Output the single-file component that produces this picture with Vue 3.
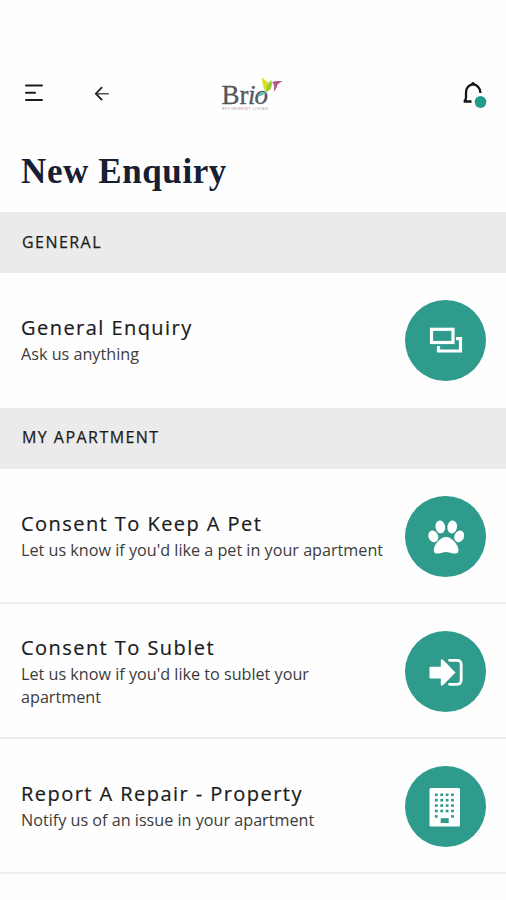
<template>
  <div class="page">
    <header class="topbar">
      <button class="icon-button menu-button" aria-label="Menu">
        <svg width="20" height="18" viewBox="0 0 20 18" fill="none" stroke="#1c1c24" stroke-width="2" stroke-linecap="round">
          <path d="M2 1.5H18M2 8.7H11M2 15.9H18" />
        </svg>
      </button>
      <button class="icon-button back-button" aria-label="Back">
        <svg width="16" height="16" viewBox="0 0 16 16" fill="none" stroke-linecap="round">
          <path d="M2 8.7H14.3" stroke="#555" stroke-width="1.4" />
          <path d="M7.6 2.6L1.9 8.7L7.6 14.6" stroke="#222" stroke-width="1.8" />
        </svg>
      </button>

      <svg class="logo" width="64" height="38" viewBox="0 0 64 38">
        <text class="logo-name" x="0.5" y="28.500" textLength="27">Br</text>
        <text class="logo-name logo-italic" x="27" y="28.500" textLength="20">io</text>
        <path d="M41 2C43 6 50 7 50 12C50 16 46 17 44 16C42 12 41 7 41 2Z" fill="#d9df2a" />
        <path d="M50 5C52 9 51 15 45 17C45 12 47 8 50 5Z" fill="#9ccb3b" />
        <path d="M37 20C39 18 42 17 46 17.500C44 19 41 20.500 38 21.500Z" fill="#62bfb9" />
        <path d="M51 7.500C54 5.500 58 6 61.500 6.200C58 8 56.500 9 55.500 13L52.500 17C53.500 13 53.500 9 51 7.500Z" fill="#b65a86" />
        <text class="logo-tag" x="1" y="34.500" textLength="46">RETIREMENT LIVING</text>
      </svg>

      <button class="icon-button bell-button" aria-label="Notifications">
        <svg width="25" height="28" viewBox="0 0 25 28">
          <path
            d="M8.500 20.500H1.800V19.500C2.800 18.800 3 18 3 16.500V11.500C3 7 5.600 4.300 10 3.200C14.600 4.300 17.300 7 17.500 12"
            fill="none" stroke="#15151a" stroke-width="2.300"
          />
          <circle cx="10" cy="2.800" r="1.800" fill="#15151a" />
          <circle cx="17.500" cy="21" r="5.900" fill="#249b88" />
        </svg>
      </button>
    </header>

    <h1 class="title">New Enquiry</h1>

    <section v-for="section in sections" :key="section.label">
      <h2 class="section-label">{{ section.label }}</h2>
      <div v-for="item in section.items" :key="item.title" class="row">
        <div class="row-text">
          <h3>{{ item.title }}</h3>
          <p>{{ item.description }}</p>
        </div>
        <div class="row-icon">
          <svg v-if="item.icon === 'chat'" width="40" height="40" viewBox="0 0 40 40" fill="none" stroke="#fff" stroke-width="3.200">
            <rect x="5.500" y="8.300" width="21.500" height="13.200" />
            <path d="M30 17.700H34.500V30H12.500V25" />
          </svg>
          <svg v-else-if="item.icon === 'paw'" width="40" height="40" viewBox="0 0 40 40" fill="#fff">
            <ellipse cx="14.300" cy="9.900" rx="4.800" ry="6.500" transform="rotate(-8 14.300 9.900)" />
            <ellipse cx="26.200" cy="9.900" rx="4.800" ry="6.500" transform="rotate(8 26.200 9.900)" />
            <ellipse cx="7.300" cy="19.400" rx="4.800" ry="6" transform="rotate(-22 7.300 19.400)" />
            <ellipse cx="33.200" cy="19.400" rx="4.800" ry="6" transform="rotate(22 33.200 19.400)" />
            <path d="M20 20C26.500 20 32.500 28.500 32.500 33C32.500 36 30.500 36.500 28 36.500C25 36.500 23 34.900 20 34.900C17 34.900 15 36.500 12 36.500C9.500 36.500 7.800 36 7.800 33C7.800 28.500 13.500 20 20 20Z" />
          </svg>
          <svg v-else-if="item.icon === 'enter'" width="40" height="40" viewBox="0 0 40 40">
            <path d="M4.500 14.800H14.800V8.500Q15.200 6.300 17.200 7.900L29.500 20.500L17.200 33Q15.200 34.600 14.800 32.400V26.500H4.500Q3.500 26.500 3.500 25.500V16Q3.500 14.800 4.500 14.800Z" fill="#fff" />
            <path d="M23.500 8.300H31Q35.200 8.300 35.200 12.500V28Q35.200 32.300 31 32.300H23.500" fill="none" stroke="#fff" stroke-width="2.800" stroke-linecap="round" />
          </svg>
          <svg v-else width="40" height="40" viewBox="0 0 40 40">
            <rect x="3.500" y="1" width="30.500" height="38.500" rx="1.500" fill="#fff" />
            <rect
              v-for="dot in windows" :key="`${dot.x}-${dot.y}`"
              :x="dot.x" :y="dot.y" width="2.800" height="2.600" fill="#2f9b8c"
            />
            <rect x="14.700" y="31.200" width="8" height="4.800" fill="#2f9b8c" />
          </svg>
        </div>
      </div>
    </section>
  </div>
</template>

<script setup>
const sections = [
  {
    label: 'GENERAL',
    items: [
      { title: 'General Enquiry', description: 'Ask us anything', icon: 'chat' }
    ]
  },
  {
    label: 'MY APARTMENT',
    items: [
      { title: 'Consent To Keep A Pet', description: "Let us know if you'd like a pet in your apartment", icon: 'paw' },
      { title: 'Consent To Sublet', description: "Let us know if you'd like to sublet your apartment", icon: 'enter' },
      { title: 'Report A Repair - Property', description: 'Notify us of an issue in your apartment', icon: 'building' }
    ]
  }
];

// Building windows: 5 rows of 4, the last row leaves room for the door
const windows = [];
for (let r = 0; r < 5; r++) {
  for (let c = 0; c < 4; c++) {
    if (r === 4 && (c === 1 || c === 2)) continue;
    windows.push({ x: 8.9 + c * 5.4, y: 6.5 + r * 5.4 });
  }
}
</script>

<style>
body {
  margin: 0;
  background: #fefefe;
}
</style>

<style scoped>
.page {
  height: 900px;
  overflow: hidden;
  background: #fefefe;
  color: #1b1b1b;
  font-family: "Open Sans", "Noto Sans", sans-serif;
}

.topbar {
  display: flex;
  box-sizing: border-box;
  align-items: center;
  height: 133px;
  padding: 53px 18px 0 24px;
}

.icon-button {
  display: flex;
  padding: 0;
  border: none;
  background: none;
}

.back-button {
  margin-left: 50px;
}

.logo {
  margin-left: 111px;
  margin-top: 2px;
}

.logo-name {
  font-family: "Liberation Serif", serif;
  font-size: 27px;
  fill: #55565a;
  stroke: #55565a;
  stroke-width: 0.3px;
}

.logo-italic {
  font-style: italic;
}

.logo-tag {
  font-size: 4px;
  fill: #a58b98;
}

.bell-button {
  margin-left: auto;
  margin-top: 3px;
}

.title {
  margin: 0;
  height: 79px;
  padding-left: 21px;
  font-family: "Liberation Serif", serif;
  font-size: 35px;
  font-weight: 700;
  line-height: 77px;
  letter-spacing: 0.6px;
  color: #172033;
}

.section-label {
  box-sizing: border-box;
  height: 61px;
  margin: 0;
  padding-left: 22px;
  background: #ebebeb;
  font-size: 16px;
  font-weight: 500;
  line-height: 60px;
  letter-spacing: 1.45px;
  -webkit-text-stroke: 0.25px #1b1b1b;
}

section + section .section-label {
  line-height: 59px;
}

.row {
  display: flex;
  box-sizing: border-box;
  align-items: center;
  justify-content: space-between;
  height: 135px;
  padding: 0 20px 0 21px;
}

section + section .row {
  box-shadow: inset 0 -2px #eee;
}

.row-text {
  width: 366px;
}

.row-text h3 {
  margin: 0;
  font-size: 20px;
  font-weight: 400;
  line-height: 27px;
  letter-spacing: 1.45px;
  -webkit-text-stroke: 0.2px #1b1b1b;
}

.row-text p {
  margin: 0;
  padding: 2px 0 1px;
  font-size: 16.18px;
  line-height: 23px;
  color: #3c3c3c;
}

.row-icon {
  display: flex;
  flex: none;
  align-items: center;
  justify-content: center;
  width: 81px;
  height: 81px;
  border-radius: 50%;
  background: #2f9b8c;
}
</style>
